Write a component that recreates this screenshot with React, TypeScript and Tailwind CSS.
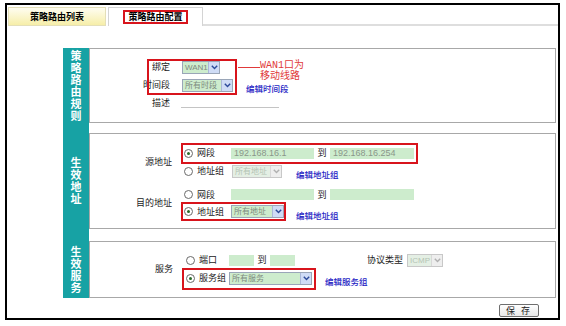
import React from "react";

const teal = "bg-[#17a2a4]";

function Chevron({ disabled }: { disabled?: boolean }) {
  return (
    <svg width="7" height="5" viewBox="0 0 7 5">
      <path
        d="M0.8 0.8 L3.5 3.6 L6.2 0.8"
        fill="none"
        stroke={disabled ? "#b0b0b0" : "#2b4a9a"}
        strokeWidth="1.4"
      />
    </svg>
  );
}

function Select({ w, text, disabled }: { w: string; text: string; disabled?: boolean }) {
  return (
    <div
      className={`${w} h-[13px] flex items-stretch border ${
        disabled ? "border-[#c8c8c8] bg-[#e4efe4]" : "border-[#9aa6b8] bg-[#cdeccd]"
      }`}
    >
      <span
        className={`flex-1 min-w-0 pl-[2px] text-[8px] leading-[11px] whitespace-nowrap overflow-hidden font-['Liberation_Sans','Noto_Sans_CJK_SC',sans-serif] ${
          disabled ? "text-[#b4c4b4]" : "text-[#7d8a7d]"
        }`}
      >
        {text}
      </span>
      <span
        className={`w-[11px] shrink-0 flex items-center justify-center border-l ${
          disabled ? "border-[#d8d8d8] bg-[#eeeeee]" : "border-[#aab8d8] bg-[#cfdcf6]"
        }`}
      >
        <Chevron disabled={disabled} />
      </span>
    </div>
  );
}

function Field({ w, text }: { w: string; text?: string }) {
  return (
    <div className={`${w} h-[11px] bg-[#cdeccd] text-[9px] leading-[11px] text-[#8a968a] pl-[3px] font-['Liberation_Sans',sans-serif]`}>
      {text}
    </div>
  );
}

function Radio({ checked, label, w }: { checked?: boolean; label: string; w: string }) {
  return (
    <div className={`${w} flex items-center gap-[4px] shrink-0`}>
      <span className="w-[9px] h-[9px] rounded-full border border-[#6a6a6a] bg-white flex items-center justify-center">
        {checked && <span className="w-[3px] h-[3px] rounded-full bg-[#2a6a2a]" />}
      </span>
      <span className="text-[9px] text-[#222] whitespace-nowrap">{label}</span>
    </div>
  );
}

function Link({ children }: { children: React.ReactNode }) {
  return <span className="text-[8.5px] font-medium text-[#2424c4] whitespace-nowrap">{children}</span>;
}

function Label({ w, children }: { w: string; children: React.ReactNode }) {
  return <span className={`${w} text-right text-[9px] text-[#222] whitespace-nowrap`}>{children}</span>;
}

function SideLabel({ text }: { text: string }) {
  return (
    <div className={`w-[26px] ${teal} flex items-center justify-center`}>
      <span className="[writing-mode:vertical-rl] text-white font-bold text-[11px] leading-[12px] tracking-[1px]">
        {text}
      </span>
    </div>
  );
}

function Spacer({ h }: { h: string }) {
  return (
    <div className={`flex ${h}`}>
      <div className={`w-[26px] ${teal}`} />
      <div className="flex-1" />
    </div>
  );
}

export default function App() {
  return (
    <div className="w-[566px] h-[326px] bg-white overflow-hidden font-['Noto_Sans_CJK_SC',sans-serif] pt-[3px] pl-[5px]">
      <div className="w-[555px] h-[317px] border-2 border-black flex flex-col">
        {/* tabs */}
        <div className="flex items-end h-[21px] pt-[1px]">
          <div className="ml-[1px] w-[98px] h-[19px] border border-[#e4dfb8] bg-gradient-to-b from-[#fffdf0] to-[#f6eea8] flex items-center justify-center text-[9px] font-bold text-black">
            策略路由列表
          </div>
          <div className="ml-[2px] w-[95px] h-[19px] border border-b-0 border-[#d4d4d4] bg-white flex items-center justify-center">
            <span className="border-2 border-[#d8141c] px-[3px] h-[14px] flex items-center text-[9px] font-bold text-black">
              策略路由配置
            </span>
          </div>
          <div className="flex-1 border-b-2 border-[#dedede]" />
        </div>

        <div className="ml-[56px] mt-[22px] w-[493px] flex flex-col">
          {/* section 1 */}
          <div className="flex h-[75px]">
            <SideLabel text="策略路由规则" />
            <div className="relative flex-1 border border-[#a8a8a8] pt-[9px]">
              <div className="flex items-center h-[18px]">
                <Label w="w-[80px]">绑定</Label>
                <div className="ml-[12px]">
                  <Select w="w-[38px]" text="WAN1" />
                </div>
              </div>
              <div className="flex items-center h-[18px]">
                <Label w="w-[80px]">时间段</Label>
                <div className="ml-[12px]">
                  <Select w="w-[51px]" text="所有时段" />
                </div>
                <div className="ml-[13px]">
                  <Link>编辑时间段</Link>
                </div>
              </div>
              <div className="flex items-center h-[17px]">
                <Label w="w-[80px]">描述</Label>
                <div className="ml-[11px] w-[98px] h-[12px] border-b border-[#c4c4c4] self-start mt-[2px]" />
              </div>
              {/* annotation */}
              <div className="absolute left-[57px] top-[10px] w-[90px] h-[36px] border-2 border-[#d8141c]" />
              <div className="absolute left-[148px] top-[18px] w-[22px] h-[1px] bg-[#e03a3a]" />
              <div className="absolute left-[170px] top-[11px] text-[10px] leading-[11px] text-[#e03a3a] font-['Liberation_Mono','Noto_Sans_CJK_SC',monospace]">
                <div>WAN1口为</div>
                <div>移动线路</div>
              </div>
            </div>
          </div>

          <Spacer h="h-[10px]" />

          {/* section 2 */}
          <div className="flex h-[96px]">
            <SideLabel text="生效地址" />
            <div className="relative flex-1 border border-[#a8a8a8] pt-[10px]">
              <div className="flex items-center">
                <Label w="w-[82px]">源地址</Label>
                <div className="ml-[12px] flex flex-col">
                  <div className="flex items-center h-[18px]">
                    <Radio checked label="网段" w="w-[47px]" />
                    <Field w="w-[83px]" text="192.168.16.1" />
                    <span className="w-[16px] text-center text-[9px] text-[#222]">到</span>
                    <Field w="w-[84px]" text="192.168.16.254" />
                  </div>
                  <div className="flex items-center h-[18px]">
                    <Radio label="地址组" w="w-[48px]" />
                    <Select w="w-[50px]" text="所有地址" disabled />
                    <div className="ml-[14px]">
                      <Link>编辑地址组</Link>
                    </div>
                  </div>
                </div>
              </div>
              <div className="flex items-center mt-[6px]">
                <Label w="w-[82px]">目的地址</Label>
                <div className="ml-[12px] flex flex-col">
                  <div className="flex items-center h-[17px]">
                    <Radio label="网段" w="w-[47px]" />
                    <Field w="w-[83px]" />
                    <span className="w-[16px] text-center text-[9px] text-[#222]">到</span>
                    <Field w="w-[84px]" />
                  </div>
                  <div className="flex items-center h-[17px]">
                    <Radio checked label="地址组" w="w-[47px]" />
                    <Select w="w-[53px]" text="所有地址" />
                    <div className="ml-[12px]">
                      <Link>编辑地址组</Link>
                    </div>
                  </div>
                </div>
              </div>
              <div className="absolute left-[91px] top-[9px] w-[237px] h-[21px] border-2 border-[#d8141c]" />
              <div className="absolute left-[91px] top-[68px] w-[105px] h-[19px] border-2 border-[#d8141c]" />
            </div>
          </div>

          <Spacer h="h-[12px]" />

          {/* section 3 */}
          <div className="flex h-[57px]">
            <SideLabel text="生效服务" />
            <div className="relative flex-1 border border-[#a8a8a8] pt-[9px]">
              <div className="flex items-center">
                <Label w="w-[83px]">服务</Label>
                <div className="ml-[13px] flex flex-col">
                  <div className="flex items-center h-[18px]">
                    <Radio label="端口" w="w-[43px]" />
                    <Field w="w-[25px]" />
                    <span className="w-[16px] text-center text-[9px] text-[#222]">到</span>
                    <Field w="w-[25px]" />
                    <span className="ml-[72px] text-[9px] text-[#222] whitespace-nowrap">协议类型</span>
                    <div className="ml-[4px]">
                      <Select w="w-[36px]" text="ICMP" disabled />
                    </div>
                  </div>
                  <div className="flex items-center h-[18px]">
                    <Radio checked label="服务组" w="w-[43px]" />
                    <Select w="w-[83px]" text="所有服务" />
                    <div className="ml-[13px]">
                      <Link>编辑服务组</Link>
                    </div>
                  </div>
                </div>
              </div>
              <div className="absolute left-[92px] top-[26px] w-[134px] h-[22px] border-2 border-[#d8141c]" />
            </div>
          </div>

          <div className="flex justify-end mt-[6px] pr-[17px]">
            <button className="w-[40px] h-[13px] border border-[#6e6e6e] rounded-[2px] bg-gradient-to-b from-white to-[#e8e8e8] text-[9px] leading-[11px] text-[#222] tracking-[2px]">
              保 存
            </button>
          </div>
        </div>
      </div>
    </div>
  );
}
